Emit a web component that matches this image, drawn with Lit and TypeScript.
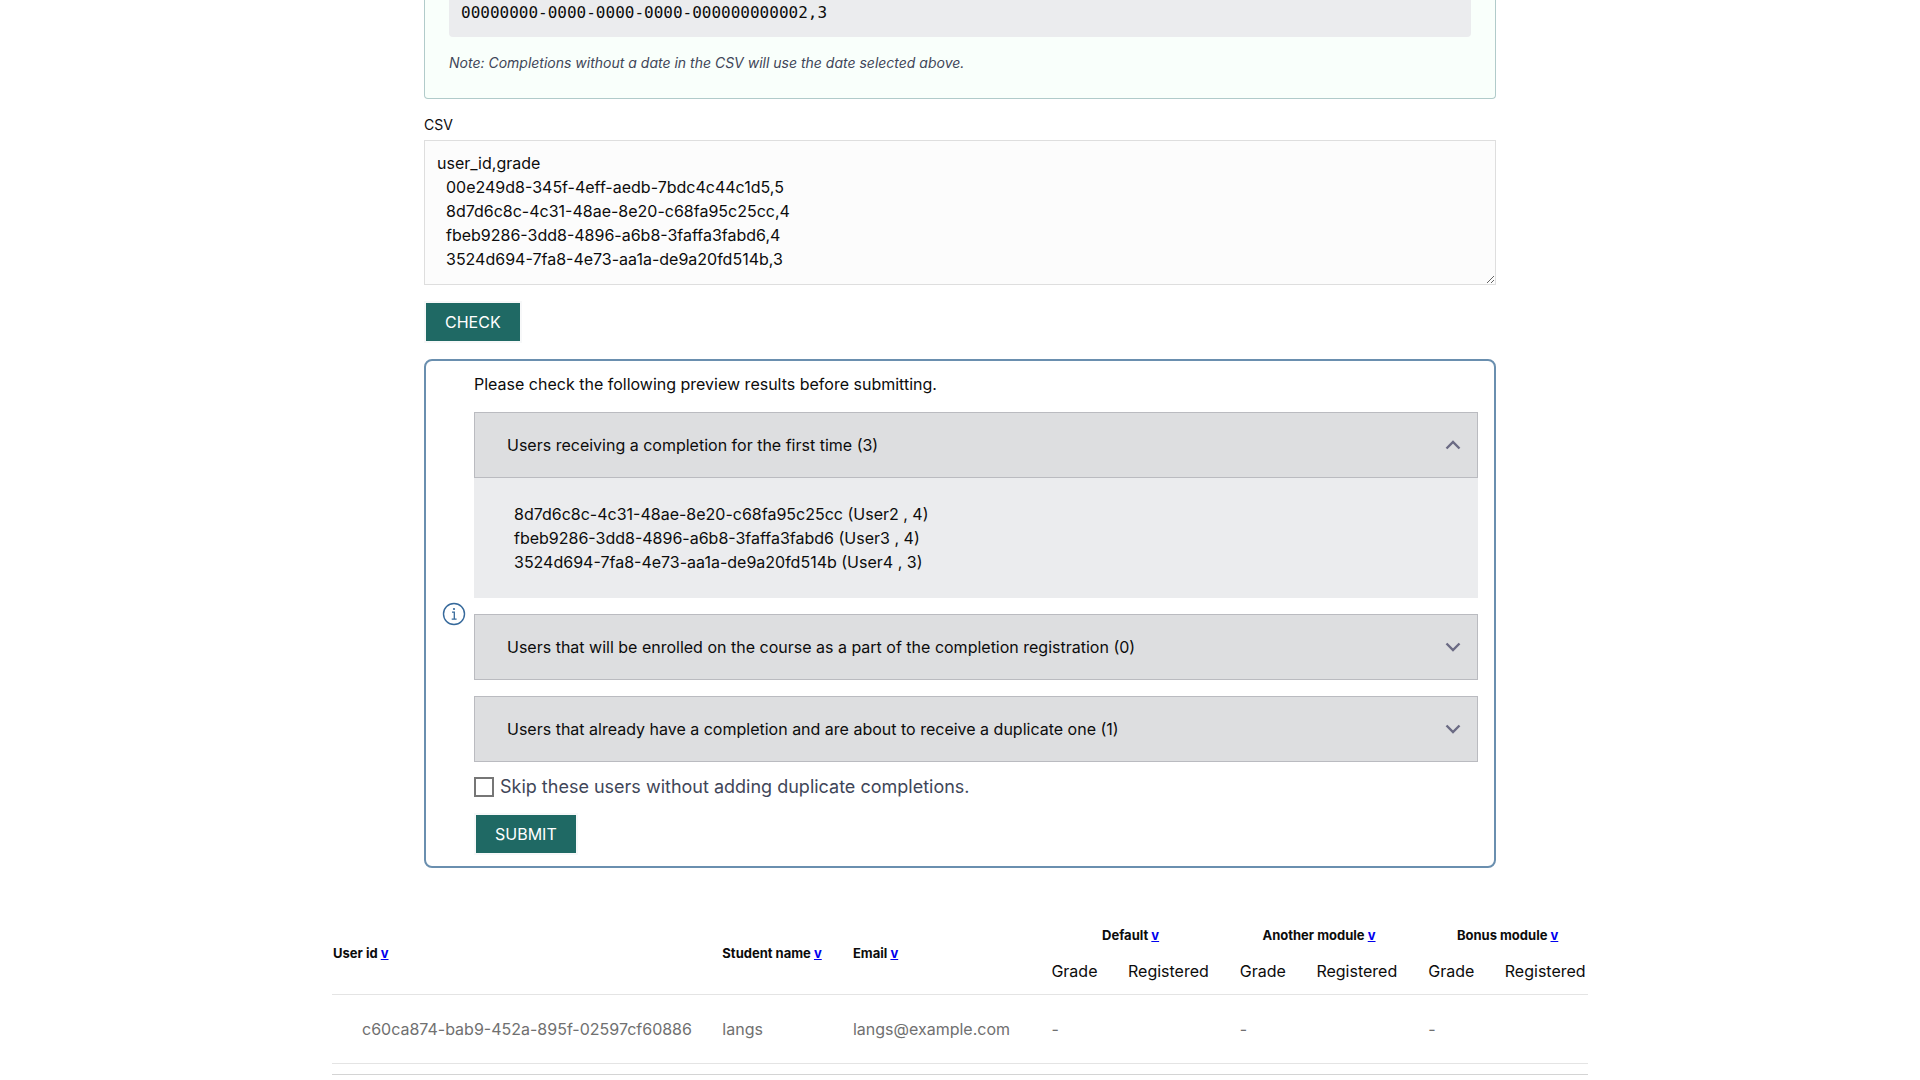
import { LitElement, html, css, nothing } from "lit";
import { customElement, state } from "lit/decorators.js";

interface Group {
  title: string;
  users: string[];
}

const GROUPS: Group[] = [
  {
    title: "Users receiving a completion for the first time (3)",
    users: [
      "8d7d6c8c-4c31-48ae-8e20-c68fa95c25cc (User2 , 4)",
      "fbeb9286-3dd8-4896-a6b8-3faffa3fabd6 (User3 , 4)",
      "3524d694-7fa8-4e73-aa1a-de9a20fd514b (User4 , 3)",
    ],
  },
  {
    title: "Users that will be enrolled on the course as a part of the completion registration (0)",
    users: [],
  },
  {
    title: "Users that already have a completion and are about to receive a duplicate one (1)",
    users: ["00e249d8-345f-4eff-aedb-7bdc4c44c1d5 (User1 , 5)"],
  },
];

const CSV = [
  "user_id,grade",
  "  00e249d8-345f-4eff-aedb-7bdc4c44c1d5,5",
  "  8d7d6c8c-4c31-48ae-8e20-c68fa95c25cc,4",
  "  fbeb9286-3dd8-4896-a6b8-3faffa3fabd6,4",
  "  3524d694-7fa8-4e73-aa1a-de9a20fd514b,3",
].join("\n");

const MODULES = ["Default", "Another module", "Bonus module"];

const STUDENTS = [
  { id: "c60ca874-bab9-452a-895f-02597cf60886", name: "langs", email: "langs@example.com" },
];

@customElement("app-root")
export class AppRoot extends LitElement {
  @state() private open = [true, false, false];

  static styles = css`
    :host {
      display: block;
      font-family: Inter, "Liberation Sans", sans-serif;
      font-size: 16px;
      line-height: 24px;
      color: #0c0c0c;
      background: #fff;
    }
    * {
      box-sizing: border-box;
    }
    .column {
      max-width: 1072px;
      margin: 0 auto;
    }
    .help {
      padding: 0 24px 24px;
      border: 1px solid #b1cbca;
      border-top: 0;
      border-radius: 0 0 4px 4px;
      background: #f9fffb;
    }
    .sample {
      margin: 0;
      padding: 0 12px 12px;
      border-radius: 0 0 4px 4px;
      background: #ebecee;
      font: 16px/25px "DejaVu Sans Mono", monospace;
    }
    .note {
      margin: 0;
      padding: 15px 0 0;
      font-size: 14px;
      line-height: 22px;
      font-style: italic;
      color: #3f4658;
    }
    .label {
      display: block;
      margin: 16px 0 5px;
      font-size: 14px;
      line-height: 20px;
    }
    .csv {
      display: block;
      width: 100%;
      height: 145px;
      padding: 10px 12px;
      border: 1px solid #dedede;
      background: #fcfcfc;
      font: inherit;
      color: inherit;
      resize: vertical;
      outline: none;
    }
    .button {
      display: block;
      padding: 7px 19px;
      border: 2px solid #f7f8f9;
      background: #1f6964;
      background-clip: padding-box;
      font: inherit;
      color: #fff;
      text-transform: uppercase;
      cursor: pointer;
    }
    .check {
      margin: 16px 0;
    }
    .preview {
      display: flex;
      align-items: center;
      gap: 8px;
      padding: 11px 16px;
      border: 2px solid #6a8faf;
      border-radius: 8px;
    }
    .info {
      flex: none;
      width: 24px;
      height: 24px;
    }
    .body {
      flex: 1;
      min-width: 0;
    }
    .lead {
      margin: 0 0 16px;
    }
    .groups {
      display: grid;
      gap: 16px;
    }
    .toggle {
      display: flex;
      align-items: center;
      justify-content: space-between;
      width: 100%;
      padding: 20px 16px 20px 32px;
      border: 1px solid #babbc0;
      background: #dddee0;
      font: inherit;
      color: inherit;
      text-align: left;
      cursor: pointer;
    }
    .chevron {
      width: 16px;
      height: 16px;
    }
    .users {
      margin: 0;
      padding: 24px 40px;
      list-style: none;
      background: #ebecee;
    }
    .skip {
      display: flex;
      align-items: center;
      gap: 6px;
      margin: 12px 0 13px;
      font-size: 18px;
      line-height: 26px;
      color: #3f4658;
    }
    .tick {
      appearance: none;
      width: 20px;
      height: 20px;
      margin: 0;
      border: 2px solid #767676;
      background: #fff;
    }
    .tick:checked {
      background: #1f6964;
    }
    .results {
      max-width: 1256px;
      margin: 48px auto 0;
      padding-bottom: 10px;
      border-bottom: 1px solid #d4d4d4;
    }
    table {
      width: 100%;
      table-layout: fixed;
      border-collapse: collapse;
    }
    .col-id {
      width: 31%;
    }
    .col-name {
      width: 10.4%;
    }
    .col-email {
      width: 15.8%;
    }
    .col-grade {
      width: 6.1%;
    }
    .col-registered {
      width: 8.9%;
    }
    th,
    td {
      padding: 0 0 0 1px;
      text-align: left;
      font-weight: 400;
      white-space: nowrap;
    }
    .head {
      padding-bottom: 4px;
      font-size: 13px;
      font-weight: 700;
    }
    .module {
      height: 37px;
      padding: 0 28px 0 0;
      text-align: center;
    }
    .module:last-child {
      padding-right: 0;
    }
    .sub {
      height: 41px;
      padding-bottom: 5px;
    }
    thead {
      border-bottom: 1px solid #e4e4e4;
    }
    tbody tr {
      height: 69px;
      border-bottom: 1px solid #e4e4e4;
      color: #707070;
    }
    tbody .uid {
      padding-left: 30px;
    }
    a {
      color: #0000ee;
    }
  `;

  private toggle(i: number) {
    this.open = this.open.map((v, n) => (n === i ? !v : v));
  }

  private sort(label: string) {
    return html`${label} <a href="#" aria-label="Sort by ${label}">v</a>`;
  }

  render() {
    return html`
      <main>
        <div class="column">
          <section class="help">
            <pre class="sample">00000000-0000-0000-0000-000000000002,3</pre>
            <p class="note">Note: Completions without a date in the CSV will use the date selected above.</p>
          </section>
          <label class="label" for="csv">CSV</label>
          <textarea class="csv" id="csv" spellcheck="false" .value=${CSV}></textarea>
          <button class="button check" type="button">Check</button>
          <section class="preview">
            <svg class="info" viewBox="0 0 24 24" fill="none" stroke="#36699b" aria-hidden="true">
              <circle cx="12" cy="12" r="10.5" stroke-width="1.4" />
              <path d="M10 10.1h2.3v7M9.7 17.1h4.9" stroke-width="1.3" />
              <circle cx="12" cy="7" r="1.1" fill="#36699b" stroke="none" />
            </svg>
            <div class="body">
              <p class="lead">Please check the following preview results before submitting.</p>
              <div class="groups">
                ${GROUPS.map(
                  (g, i) => html`<div>
                    <button
                      class="toggle"
                      type="button"
                      aria-expanded=${this.open[i] ? "true" : "false"}
                      @click=${() => this.toggle(i)}
                    >
                      <span>${g.title}</span>
                      <svg class="chevron" viewBox="0 0 16 16" fill="none" stroke="#6b6b84" stroke-width="2.4" aria-hidden="true">
                        <path d=${this.open[i] ? "M1.5 11.5L8 5L14.5 11.5" : "M1.5 4.5L8 11L14.5 4.5"} />
                      </svg>
                    </button>
                    ${this.open[i]
                      ? html`<ul class="users">
                          ${g.users.map((u) => html`<li>${u}</li>`)}
                        </ul>`
                      : nothing}
                  </div>`,
                )}
              </div>
              <label class="skip" for="skip">
                <input class="tick" id="skip" type="checkbox" />
                Skip these users without adding duplicate completions.
              </label>
              <button class="button" type="button">Submit</button>
            </div>
          </section>
        </div>
        <div class="results">
          <table>
            <colgroup>
              <col class="col-id" />
              <col class="col-name" />
              <col class="col-email" />
              <col class="col-grade" />
              <col class="col-registered" />
              <col class="col-grade" />
              <col class="col-registered" />
              <col class="col-grade" />
              <col />
            </colgroup>
            <thead>
              <tr>
                <th class="head" rowspan="2">${this.sort("User id")}</th>
                <th class="head" rowspan="2">${this.sort("Student name")}</th>
                <th class="head" rowspan="2">${this.sort("Email")}</th>
                ${MODULES.map((m) => html`<th class="head module" colspan="2">${this.sort(m)}</th>`)}
              </tr>
              <tr>
                ${MODULES.map(() => html`<th class="sub">Grade</th><th class="sub">Registered</th>`)}
              </tr>
            </thead>
            <tbody>
              ${STUDENTS.map(
                (s) => html`<tr>
                  <td class="uid">${s.id}</td>
                  <td>${s.name}</td>
                  <td>${s.email}</td>
                  ${MODULES.map(() => html`<td>-</td><td></td>`)}
                </tr>`,
              )}
            </tbody>
          </table>
        </div>
      </main>
    `;
  }
}
